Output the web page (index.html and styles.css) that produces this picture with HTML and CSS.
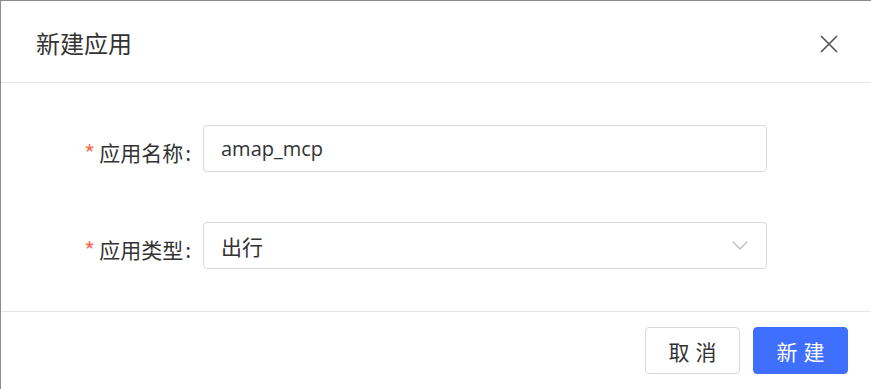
FILE: index.html
```html
<!DOCTYPE html>
<html lang="zh-CN">
<head>
<meta charset="utf-8">
<title>新建应用</title>
<link rel="stylesheet" href="styles.css">
</head>
<body>
<div class="dialog">
  <div class="dialog-header">
    <span class="dialog-title">新建应用</span>
    <button class="close-btn" aria-label="关闭">
      <svg width="18" height="18" viewBox="0 0 18 18"><path d="M1 1 L17 17 M17 1 L1 17" stroke="#555" stroke-width="1.7" fill="none"/></svg>
    </button>
  </div>
  <div class="dialog-body">
    <div class="form-row">
      <label class="form-label"><span class="req">*</span>应用名称<span class="colon">:</span></label>
      <div class="field">amap_mcp</div>
    </div>
    <div class="form-row">
      <label class="form-label"><span class="req">*</span>应用类型<span class="colon">:</span></label>
      <div class="field select">
        <span>出行</span>
        <svg class="chevron" width="16" height="9" viewBox="0 0 16 9"><path d="M0.8 0.8 L8 8 L15.2 0.8" stroke="#bfbfbf" stroke-width="1.4" fill="none"/></svg>
      </div>
    </div>
  </div>
  <div class="dialog-footer">
    <button class="btn btn-default">取消</button>
    <button class="btn btn-primary">新建</button>
  </div>
</div>
</body>
</html>
```

FILE: styles.css
```css
* { box-sizing: border-box; }
html, body { margin: 0; padding: 0; background: #fff; }
body {
  font-family: "Open Sans", "Noto Sans CJK SC", sans-serif;
  color: #333;
}
.dialog {
  width: 871px;
  height: 389px;
  border-top: 1px solid #8c8c8c;
  border-left: 1px solid #8c8c8c;
  display: flex;
  flex-direction: column;
  background: #fff;
}
.dialog-header {
  height: 82px;
  border-bottom: 1px solid #e6e6e6;
  display: flex;
  align-items: center;
  justify-content: space-between;
  padding: 0 33px 0 35px;
}
.dialog-title {
  font-family: "Noto Sans CJK SC", sans-serif;
  font-size: 24px;
  color: #333;
  line-height: 1;
  margin-top: 2px;
}
.close-btn {
  border: 0;
  background: none;
  padding: 0;
  width: 18px;
  height: 18px;
  display: flex;
  margin-top: 5px;
}
.dialog-body {
  height: 229px;
  border-bottom: 1px solid #e6e6e6;
  padding-top: 42px;
  display: flex;
  flex-direction: column;
  gap: 50px;
}
.form-row {
  display: grid;
  grid-template-columns: 190px 564px;
  column-gap: 12px;
  align-items: center;
}
.form-label {
  text-align: right;
  font-family: "Noto Sans CJK SC", sans-serif;
  font-size: 21px;
  color: #333;
  padding-top: 3px;
}
.req {
  color: #f76d55;
  margin-right: 4px;
  font-family: "Noto Sans CJK SC", sans-serif;
  font-size: 24px;
  position: relative;
  top: 2px;
}
.colon { margin-left: 2px; }
.field {
  height: 47px;
  border: 1px solid #d9d9d9;
  border-radius: 4px;
  padding: 0 17px;
  display: flex;
  align-items: center;
  font-size: 20px;
  color: #333;
}
.select { justify-content: space-between; }
.select span { font-family: "Noto Sans CJK SC", sans-serif; font-size: 21px; }
.chevron { margin-right: 1px; }
.dialog-footer {
  flex: 1;
  display: flex;
  justify-content: flex-end;
  align-items: flex-start;
  padding: 15px 23px 0 0;
  gap: 13px;
}
.btn {
  width: 95px;
  height: 47px;
  border-radius: 4px;
  font-family: "Noto Sans CJK SC", sans-serif;
  font-size: 21px;
  letter-spacing: 6px;
  text-indent: 6px;
  cursor: pointer;
}
.btn-default {
  background: #fff;
  border: 1px solid #d9d9d9;
  color: #333;
}
.btn-primary {
  background: #3f6fff;
  border: 1px solid #3f6fff;
  color: #fff;
}
```
